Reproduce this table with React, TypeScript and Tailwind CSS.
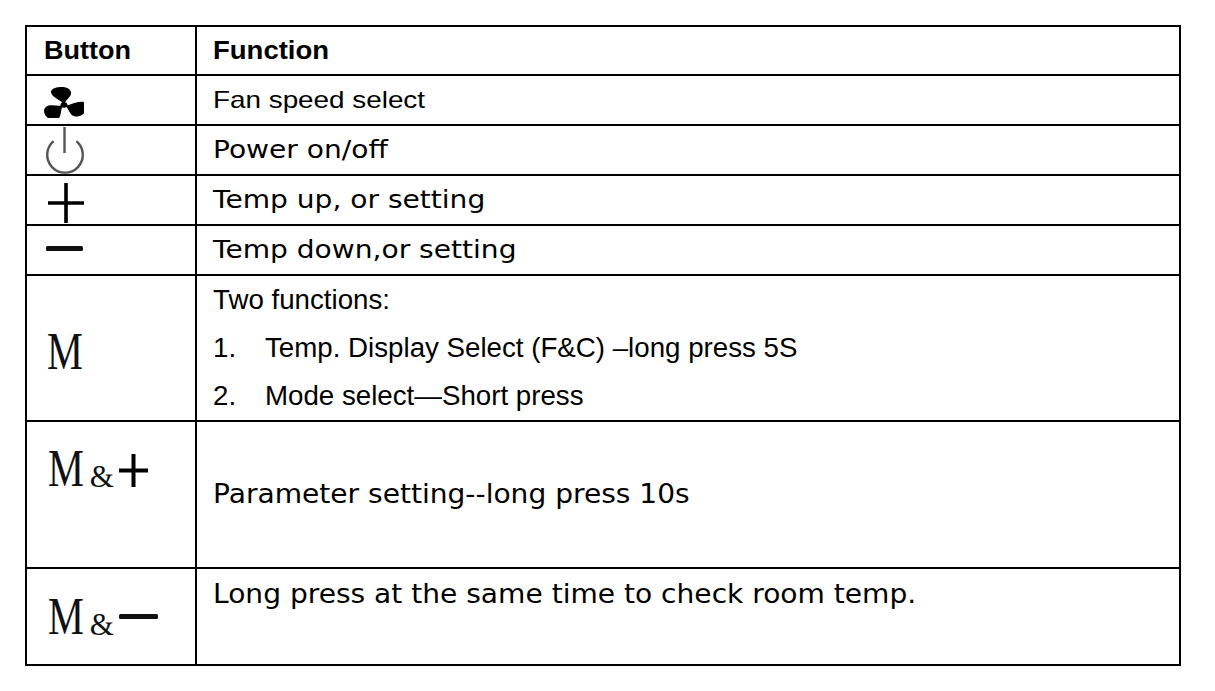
import React from "react";

const sans = "font-['Liberation_Sans',Arial,sans-serif]";
const verd = "font-['DejaVu_Sans',Verdana,sans-serif]";
const serif = "font-['Liberation_Serif','Times_New_Roman',serif]";

function FanIcon() {
  const blade =
    "M-0.6,-2.2 C-2.5,-5.5 -8.5,-9 -8.5,-13.8 C-8.5,-17.6 -3,-19 1.5,-18 C6.5,-16.8 8.6,-12.5 6.6,-9 C5,-6.2 2,-4.5 0.9,-2 Z";
  return (
    <svg width="40" height="31" viewBox="-16 -18 32 31" preserveAspectRatio="none" className="block">
      <g fill="#000" transform="rotate(-8)">
        <path d={blade} />
        <path d={blade} transform="rotate(120)" />
        <path d={blade} transform="rotate(240)" />
        <circle cx="0" cy="0" r="2.8" />
      </g>
    </svg>
  );
}

function PowerIcon() {
  return (
    <svg width="41" height="48" viewBox="0 0 41 48" className="block">
      <path
        d="M8.6 15.2 A17.8 17.8 0 1 0 31.4 15.2"
        fill="none"
        stroke="#555"
        strokeWidth="2.4"
      />
      <line x1="19.5" y1="1" x2="19.5" y2="27" stroke="#555" strokeWidth="2.4" />
    </svg>
  );
}

function PlusIcon({ w = 36, h = 40, sw = 3.6 }: { w?: number; h?: number; sw?: number }) {
  return (
    <svg width={w} height={h} viewBox={`0 0 ${w} ${h}`} className="block">
      <line x1={w / 2} y1="0" x2={w / 2} y2={h} stroke="#000" strokeWidth={sw} />
      <line x1="0" y1={h / 2} x2={w} y2={h / 2} stroke="#000" strokeWidth={sw} />
    </svg>
  );
}

function MinusBar({ w = 37, h = 5 }: { w?: number; h?: number }) {
  return (
    <svg width={w} height={h} viewBox={`0 0 ${w} ${h}`} className="block">
      <rect x="0" y="0" width={w} height={h} rx="1.5" fill="#111" />
    </svg>
  );
}

function BigM() {
  return (
    <span
      className={`${serif} inline-block origin-bottom-left scale-x-[0.84] scale-y-[1.1] text-[48px] leading-none text-[#111]`}
    >
      M
    </span>
  );
}

function Amp() {
  return (
    <span className={`${serif} -ml-[1px] inline-block text-[31px] leading-none text-[#111]`}>&amp;</span>
  );
}

export default function App() {
  return (
    <div className="min-h-screen bg-white pl-[25px] pt-[25px] text-black">
      <div className="w-[1156px] border-2 border-black">
        {/* Header */}
        <div className="flex h-[49px] border-b-2 border-black">
          <div className="flex w-[170px] items-center border-r-2 border-black pl-[17px]">
            <span className={`${sans} inline-block origin-left scale-x-[1.08] text-[25px] font-bold`}>
              Button
            </span>
          </div>
          <div className="flex flex-1 items-center pl-[16px]">
            <span className={`${sans} inline-block origin-left scale-x-[1.1] text-[25px] font-bold`}>
              Function
            </span>
          </div>
        </div>

        {/* Fan */}
        <div className="flex h-[50px] border-b-2 border-black">
          <div className="flex w-[170px] items-center border-r-2 border-black pl-[17px] pt-[4px]">
            <FanIcon />
          </div>
          <div className="flex flex-1 items-center pl-[16px]">
            <span className={`${sans} inline-block origin-left scale-x-[1.16] text-[24px]`}>
              Fan speed select
            </span>
          </div>
        </div>

        {/* Power */}
        <div className="flex h-[50px] border-b-2 border-black">
          <div className="flex w-[170px] items-start border-r-2 border-black pl-[18px]">
            <PowerIcon />
          </div>
          <div className="flex flex-1 items-center pl-[16px]">
            <span className={`${verd} inline-block origin-left scale-x-[1.17] text-[24px]`}>
              Power on/off
            </span>
          </div>
        </div>

        {/* Plus */}
        <div className="flex h-[50px] border-b-2 border-black">
          <div className="flex w-[170px] items-center border-r-2 border-black pl-[21px] pt-[5px]">
            <PlusIcon />
          </div>
          <div className="flex flex-1 items-center pl-[16px]">
            <span className={`${verd} inline-block origin-left scale-x-[1.17] text-[24px]`}>
              Temp up, or setting
            </span>
          </div>
        </div>

        {/* Minus */}
        <div className="flex h-[50px] border-b-2 border-black">
          <div className="flex w-[170px] items-center border-r-2 border-black pb-[3px] pl-[19px]">
            <MinusBar />
          </div>
          <div className="flex flex-1 items-center pl-[16px]">
            <span className={`${verd} inline-block origin-left scale-x-[1.17] text-[24px]`}>
              Temp down,or setting
            </span>
          </div>
        </div>

        {/* M */}
        <div className="flex h-[146px] border-b-2 border-black">
          <div className="w-[170px] border-r-2 border-black pl-[20px] pt-[54px]">
            <BigM />
          </div>
          <div className={`${sans} flex-1 pl-[16px] text-[27.7px] leading-[48px]`}>
            <div>Two functions:</div>
            <div className="flex">
              <span className="w-[52px]">1.</span>
              <span>Temp. Display Select (F&amp;C) –long press 5S</span>
            </div>
            <div className="flex">
              <span className="w-[52px]">2.</span>
              <span>Mode select—Short press</span>
            </div>
          </div>
        </div>

        {/* M & + */}
        <div className="flex h-[147px] border-b-2 border-black">
          <div className="w-[170px] border-r-2 border-black pl-[21px] pt-[25px]">
            <div className="flex items-baseline">
              <BigM />
              <Amp />
              <span className="ml-[5px] inline-block">
                <PlusIcon w={29} h={33} sw={4} />
              </span>
            </div>
          </div>
          <div className="flex flex-1 items-center pl-[16px]">
            <span className={`${verd} inline-block origin-left scale-x-[1.08] text-[26px]`}>
              Parameter setting--long press 10s
            </span>
          </div>
        </div>

        {/* M & - */}
        <div className="flex h-[95px]">
          <div className="w-[170px] border-r-2 border-black pl-[21px] pt-[26px]">
            <div className="flex items-baseline">
              <BigM />
              <Amp />
              <span className="ml-[5px] inline-block">
                <svg width="39" height="21" viewBox="0 0 39 21" className="block">
                  <rect x="0" y="0" width="39" height="5" rx="1.5" fill="#111" />
                </svg>
              </span>
            </div>
          </div>
          <div className="flex-1 pl-[16px] pt-[10px]">
            <span className={`${verd} inline-block origin-left scale-x-[1.08] text-[26px] leading-[1.2]`}>
              Long press at the same time to check room temp.
            </span>
          </div>
        </div>
      </div>
    </div>
  );
}
